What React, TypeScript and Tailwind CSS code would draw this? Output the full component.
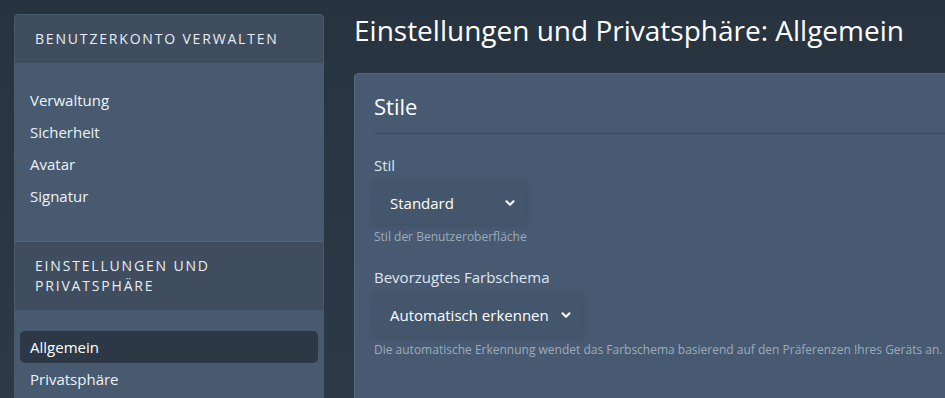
import { ChevronDown } from "lucide-react";

const accountLinks = ["Verwaltung", "Sicherheit", "Avatar", "Signatur"];
const privacyLinks = ["Allgemein", "Privatsphäre"];

function SidebarSection({ title, links, active }: { title: string; links: string[]; active?: string }) {
    return (
        <div className="border-b border-[#50637a] last:border-b-0">
            <div className="bg-[#3f4d5f] px-5 py-[14px] text-[14px] leading-[20px] tracking-[0.13em] uppercase text-[#e8edf3]">
                {title}
            </div>
            <ul className="px-[5px] pt-[21px] pb-[29px]">
                {links.map((l) => (
                    <li
                        key={l}
                        className={
                            "px-[10px] h-[32px] flex items-center text-[15px] rounded-[5px] " +
                            (l === active ? "bg-[#2c3846] text-white" : "text-[#eef2f6]")
                        }
                    >
                        {l}
                    </li>
                ))}
            </ul>
        </div>
    );
}

function FakeSelect({ value }: { value: string }) {
    return (
        <div className="inline-flex items-center justify-between gap-[10px] min-w-[152px] h-[42px] pl-4 pr-[9px] rounded-[4px] bg-[#44566b] shadow-[0_0_6px_rgba(30,40,52,0.25)] text-[15px] text-white">
            <span>{value}</span>
            <ChevronDown className="w-[14px] h-[14px]" strokeWidth={3.5} />
        </div>
    );
}

export default function App() {
    return (
        <div
            className="w-[945px] h-[398px] overflow-hidden bg-gradient-to-b from-[#283340] to-[#2d3946] flex gap-[30px] pl-[14px] pt-[14px]"
            style={{ fontFamily: '"Open Sans", "Noto Sans", sans-serif' }}
        >
            <aside className="w-[310px] shrink-0 self-start rounded-[4px] border border-[#4a5a6e] bg-[#475a70] overflow-hidden">
                <SidebarSection title="Benutzerkonto verwalten" links={accountLinks} />
                <SidebarSection title="Einstellungen und Privatsphäre" links={privacyLinks} active="Allgemein" />
            </aside>

            <main className="w-[640px] shrink-0">
                <h1 className="text-[28px] leading-[30px] text-white pt-[1px] mb-[28px]">
                    Einstellungen und Privatsphäre: Allgemein
                </h1>
                <section className="rounded-[4px] border border-[#55687f] bg-[#475a71] pl-[19px] h-[400px]">
                    <h2 className="text-[22px] leading-[30px] text-white pt-[17px] pb-[12px] border-b border-[#3c4c5f]">Stile</h2>
                    <div className="pt-[20px]">
                        <div className="text-[15px] text-[#dfe5ec] leading-[22px]">Stil</div>
                        <div className="mt-[6px]">
                            <FakeSelect value="Standard" />
                        </div>
                        <p className="text-[12px] text-[#9dabbb] mt-[4px] leading-[18px]">Stil der Benutzeroberfläche</p>
                    </div>
                    <div className="pt-[20px]">
                        <div className="text-[15px] text-[#dfe5ec] leading-[22px]">Bevorzugtes Farbschema</div>
                        <div className="mt-[6px]">
                            <FakeSelect value="Automatisch erkennen" />
                        </div>
                        <p className="text-[12px] text-[#9dabbb] mt-[5px] leading-[18px] whitespace-nowrap">
                            Die automatische Erkennung wendet das Farbschema basierend auf den Präferenzen Ihres Geräts an.
                        </p>
                    </div>
                </section>
            </main>
        </div>
    );
}
